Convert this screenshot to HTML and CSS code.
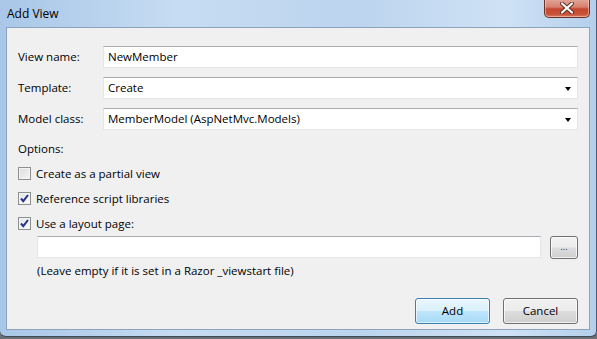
FILE: index.html
```html
<!DOCTYPE html>
<html>
<head>
<meta charset="utf-8">
<link rel="stylesheet" href="styles.css">
</head>
<body>
<div class="window">
  <div class="titlebar">
    <span class="title">Add View</span>
    <div class="close">
      <svg width="16" height="12" viewBox="0 0 16 12"><path d="M3 1.5 L13 10.5 M13 1.5 L3 10.5" stroke="#5a2a24" stroke-width="4" stroke-linecap="round"/><path d="M3 1.5 L13 10.5 M13 1.5 L3 10.5" stroke="#ffffff" stroke-width="2.2" stroke-linecap="round"/></svg>
    </div>
  </div>
  <div class="client">
    <div class="form">
      <label class="lbl">View name:</label>
      <div class="field">NewMember</div>
      <label class="lbl">Template:</label>
      <div class="field combo">Create<span class="arrow"></span></div>
      <label class="lbl">Model class:</label>
      <div class="field combo">MemberModel (AspNetMvc.Models)<span class="arrow"></span></div>
    </div>
    <div class="options">Options:</div>
    <div class="checks">
      <div class="check"><span class="box"></span>Create as a partial view</div>
      <div class="check"><span class="box on"><svg width="11" height="11" viewBox="0 0 11 11"><path d="M2 5.5 L4.3 8.2 L9 2" fill="none" stroke="#25318c" stroke-width="2"/></svg></span>Reference script libraries</div>
      <div class="check"><span class="box on"><svg width="11" height="11" viewBox="0 0 11 11"><path d="M2 5.5 L4.3 8.2 L9 2" fill="none" stroke="#25318c" stroke-width="2"/></svg></span>Use a layout page:</div>
    </div>
    <div class="layout-row">
      <div class="field wide"></div>
      <div class="btn browse">...</div>
    </div>
    <div class="note">(Leave empty if it is set in a Razor _viewstart file)</div>
    <div class="buttons">
      <div class="btn main default">Add</div>
      <div class="btn main">Cancel</div>
    </div>
  </div>
</div>
</body>
</html>
```
FILE: styles.css
```css
* { box-sizing: border-box; }
html, body { margin: 0; padding: 0; }
body {
  width: 597px;
  height: 339px;
  background: #6b6f73;
  font-family: "Segoe UI", "Open Sans", "Noto Sans", sans-serif;
  font-size: 11.5px;
  color: #000;
  overflow: hidden;
}
.window {
  width: 597px;
  height: 337px;
  background: linear-gradient(90deg, #a9c7e8 0%, #c6dcf2 30%, #bcd4ee 60%, #cfe2f5 85%, #b4cfec 100%);
  border-right: 1px solid #4a5d73;
  border-bottom: 1px solid #3d4a58;
  border-radius: 0 0 6px 6px;
  padding: 0 7px 0 6px;
  display: flex;
  flex-direction: column;
}
.titlebar {
  height: 27px;
  position: relative;
  display: flex;
  align-items: center;
}
.title {
  padding-left: 1px;
  padding-bottom: 1px;
  font-size: 12px;
}
.close {
  position: absolute;
  top: -1px;
  right: -1px;
  width: 46px;
  height: 19px;
  border: 1px solid #6b3128;
  border-top: none;
  border-radius: 0 0 5px 5px;
  background: linear-gradient(180deg, #e3a99d 0%, #d7806d 45%, #c4472f 55%, #c8533a 85%, #d77d62 100%);
  box-shadow: inset 0 0 0 1px rgba(255,220,210,0.5);
  display: flex;
  align-items: center;
  justify-content: center;
}
.client {
  width: 584px;
  height: 303px;
  background: #f0f0f0;
  border: 1px solid #8da2bd;
  padding: 18px 11px 0 11px;
  display: flex;
  flex-direction: column;
}
.form {
  display: grid;
  grid-template-columns: 85px 1fr;
  row-gap: 9px;
  align-items: center;
}
.lbl { padding-bottom: 1px; }
.field {
  height: 22px;
  background: #fff;
  border: 1px solid #e2e6ea;
  border-top-color: #abadb3;
  padding: 0 4px;
  display: flex;
  align-items: center;
  position: relative;
  line-height: 1;
}
.arrow {
  position: absolute;
  right: 6px;
  top: 9px;
  width: 0;
  height: 0;
  border-left: 3.5px solid transparent;
  border-right: 3.5px solid transparent;
  border-top: 4px solid #000;
}
.options {
  margin-top: 10px;
  height: 18px;
  line-height: 18px;
}
.checks {
  display: flex;
  flex-direction: column;
  gap: 7px;
  margin-top: 6px;
}
.check {
  height: 18px;
  display: flex;
  align-items: center;
  gap: 5px;
}
.box {
  width: 13px;
  height: 13px;
  border: 1px solid #8e8f8f;
  background: linear-gradient(135deg, #dcdcdc 0%, #f6f6f6 100%);
  box-shadow: inset 0 0 0 1px #f4f4f4;
  display: flex;
  align-items: center;
  justify-content: center;
}
.box.on { background: linear-gradient(135deg, #e2e5ea 0%, #fbfbfb 100%); }
.layout-row {
  display: flex;
  gap: 9px;
  margin-top: 4px;
  padding-left: 19px;
}
.wide { flex: 1; height: 22px; }
.btn {
  display: flex;
  align-items: center;
  justify-content: center;
  border: 1px solid #707070;
  border-radius: 3px;
  background: linear-gradient(180deg, #f2f2f2 0%, #ebebeb 48%, #dddddd 52%, #cfcfcf 100%);
  box-shadow: inset 0 0 0 1px rgba(255,255,255,0.7);
}
.browse {
  width: 28px;
  height: 23px;
  font-size: 9px;
  line-height: 1;
  padding-bottom: 2px;
  color: #333;
}
.note {
  margin-top: 3px;
  padding-left: 19px;
  height: 18px;
  line-height: 18px;
}
.buttons {
  display: flex;
  justify-content: flex-end;
  gap: 13px;
  margin-top: 18px;
}
.main {
  width: 75px;
  height: 26px;
  padding-bottom: 1px;
}
.default {
  border-color: #3c7fb1;
  background: linear-gradient(180deg, #eaf6fd 0%, #d9f0fc 48%, #bee6fd 52%, #a7d9f5 100%);
  box-shadow: inset 0 0 0 1px rgba(255,255,255,0.6);
}
```
